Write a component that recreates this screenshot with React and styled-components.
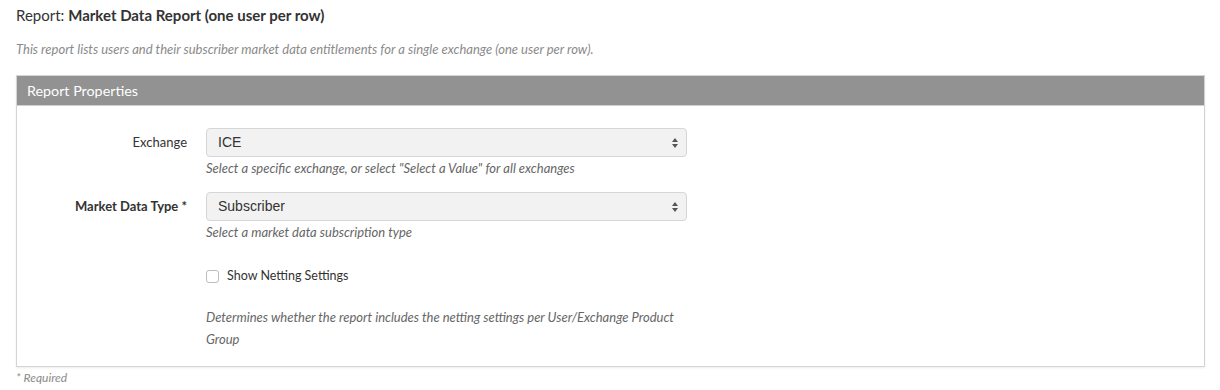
import React from "react";
import styled, { createGlobalStyle } from "styled-components";

const GlobalStyle = createGlobalStyle`
  body {
    margin: 0;
    background: #fff;
    font-family: Lato, "Noto Sans", sans-serif;
    color: #333;
  }
`;

const Page = styled.div`
  padding: 5px 15px 0 16px;
  width: 1189px;
`;

const Title = styled.h1`
  margin: 0;
  font-size: 15px;
  font-weight: 400;
  line-height: 20px;
  color: #333;

  strong {
    font-weight: 700;
  }
`;

const Intro = styled.p`
  margin: 15px 0 17px;
  font-size: 13px;
  font-style: italic;
  line-height: 18px;
  color: #8a8a8a;
`;

const Panel = styled.section`
  border: 1px solid #d4d4d4;
  box-shadow: 0 1px 2px rgba(0, 0, 0, 0.08);
`;

const PanelHeader = styled.div`
  background: #929292;
  color: #fff;
  font-size: 14.3px;
  line-height: 29px;
  padding: 0 10px;
  border-bottom: 1px solid #cfcfcf;
`;

const PanelBody = styled.div`
  padding: 22px 0 16px;
`;

const Row = styled.div`
  display: grid;
  grid-template-columns: 170px 481px;
  column-gap: 19px;
  margin-bottom: ${(p) => p.$gap || 0}px;
`;

const Label = styled.label`
  text-align: right;
  font-size: 13px;
  line-height: 29px;
  font-weight: ${(p) => (p.$required ? 700 : 400)};
  color: #333;
`;

const Control = styled.div`
  grid-column: 2;
  display: flex;
  flex-direction: column;
`;

const SelectBox = styled.div`
  position: relative;
  height: 27px;
  border: 1px solid #d6d6d6;
  border-radius: 4px;
  background: #f2f2f2;
  font-family: "Liberation Sans", Arial, sans-serif;
  font-size: 14px;
  line-height: 27px;
  padding-left: 11px;
  color: #333;
`;

const Arrows = styled.svg`
  position: absolute;
  right: 8px;
  top: 9px;
`;

const Help = styled.div`
  font-size: 13px;
  font-style: italic;
  line-height: ${(p) => p.$lh || 16}px;
  color: #666;
  margin-top: ${(p) => p.$top || 3}px;
`;

const CheckLine = styled.div`
  display: flex;
  align-items: center;
  gap: 8px;
  font-size: 12.5px;
  line-height: 16px;
  color: #333;
`;

const Box = styled.span`
  width: 11px;
  height: 11px;
  border: 1px solid #bdbdbd;
  border-radius: 3px;
  background: #fff;
`;

const Footnote = styled.div`
  margin-top: 3px;
  font-size: 12px;
  font-style: italic;
  color: #8a8a8a;
  line-height: 16px;
`;

const Select = ({ value }) => (
  <SelectBox>
    {value}
    <Arrows width="6" height="10" viewBox="0 0 6 10">
      <path d="M3 0 L6 4 L0 4 Z" fill="#555" />
      <path d="M3 10 L6 6 L0 6 Z" fill="#555" />
    </Arrows>
  </SelectBox>
);

export default function App() {
  return (
    <>
      <GlobalStyle />
      <Page>
        <Title>
          Report: <strong>Market Data Report (one user per row)</strong>
        </Title>
        <Intro>
          This report lists users and their subscriber market data entitlements for a single
          exchange (one user per row).
        </Intro>
        <Panel>
          <PanelHeader>Report Properties</PanelHeader>
          <PanelBody>
            <Row $gap={16}>
              <Label>Exchange</Label>
              <Control>
                <Select value="ICE" />
                <Help>Select a specific exchange, or select "Select a Value" for all exchanges</Help>
              </Control>
            </Row>
            <Row $gap={28}>
              <Label $required>Market Data Type *</Label>
              <Control>
                <Select value="Subscriber" />
                <Help>Select a market data subscription type</Help>
              </Control>
            </Row>
            <Row>
              <Control>
                <CheckLine>
                  <Box />
                  Show Netting Settings
                </CheckLine>
                <Help $top={22} $lh={22}>
                  Determines whether the report includes the netting settings per User/Exchange
                  Product Group
                </Help>
              </Control>
            </Row>
          </PanelBody>
        </Panel>
        <Footnote>* Required</Footnote>
      </Page>
    </>
  );
}
